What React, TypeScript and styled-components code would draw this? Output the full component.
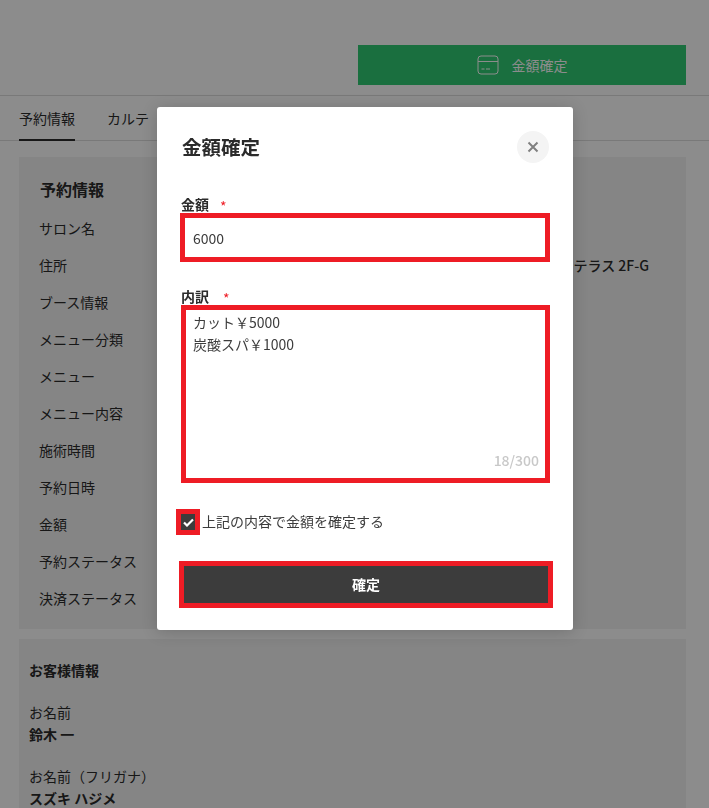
import styled, { createGlobalStyle } from "styled-components";

const GlobalStyle = createGlobalStyle`
  html, body {
    margin: 0;
    padding: 0;
    background: #fff;
    color: #2b2b2b;
    font-family: "Noto Sans CJK JP", "Noto Sans", sans-serif;
    height: 808px;
    overflow: hidden;
  }
  * { box-sizing: border-box; }
`;

const Page = styled.div`
  height: 808px;
  overflow: hidden;
`;

const Header = styled.header`
  height: 96px;
  padding: 45px 23px 0 0;
  display: flex;
  justify-content: flex-end;
  align-items: flex-start;
  border-bottom: 1px solid #ddd;
`;

const ConfirmLink = styled.button`
  width: 328px;
  height: 40px;
  border: none;
  background: #31cb74;
  color: #fff;
  font: inherit;
  font-size: 14px;
  display: flex;
  align-items: center;
  justify-content: center;
  gap: 13px;
  padding: 0;
`;

const Tabs = styled.nav`
  height: 45px;
  padding: 0 19px;
  display: flex;
  gap: 32px;
  border-bottom: 1px solid #ddd;
`;

const Tab = styled.div<{ $active?: boolean }>`
  height: 45px;
  font-size: 14px;
  line-height: 44px;
  color: #2b2b2b;
  border-bottom: ${(p) => (p.$active ? "2px solid #2b2b2b" : "none")};
`;

const Content = styled.main`
  padding: 16px 23px 0 19px;
  display: flex;
  flex-direction: column;
  gap: 10px;
`;

const InfoCard = styled.section`
  height: 472px;
  background: #f3f3f3;
  padding: 20px 37px 0 20px;
`;

const InfoTitle = styled.h2`
  margin: 0 0 9px 1px;
  font-size: 16px;
  line-height: 24px;
  font-weight: 700;
`;

const InfoRow = styled.div`
  height: 37px;
  font-size: 14px;
  line-height: 37px;
  display: flex;
  justify-content: space-between;
`;

const InfoValue = styled.span`
  font-weight: 500;
`;

const CustomerCard = styled.section`
  background: #f3f3f3;
  padding: 21px 10px 0;
`;

const CustomerTitle = styled.h3`
  margin: 0 0 21px;
  font-size: 14px;
  line-height: 20px;
  font-weight: 700;
`;

const FieldBlock = styled.div`
  font-size: 14px;
  line-height: 22px;
  margin-bottom: 20px;
`;

const FieldValue = styled.div`
  font-weight: 700;
`;

const Overlay = styled.div`
  position: fixed;
  inset: 0;
  background: rgba(0, 0, 0, 0.45);
`;

const Modal = styled.div`
  position: absolute;
  left: 157px;
  top: 107px;
  width: 416px;
  background: #fff;
  border-radius: 3px;
  padding: 24px 24px 22px;
  box-shadow: 0 2px 16px rgba(0, 0, 0, 0.18);
`;

const ModalHeader = styled.div`
  display: flex;
  justify-content: space-between;
  align-items: center;
  height: 32px;
  margin-bottom: 32px;
`;

const ModalTitle = styled.h2`
  margin: 0 0 0 1px;
  font-size: 19.5px;
  font-weight: 700;
  line-height: 32px;
  color: #2b2b2b;
`;

const CloseButton = styled.button`
  width: 32px;
  height: 32px;
  border: none;
  border-radius: 50%;
  background: #f4f4f4;
  padding: 0;
  display: flex;
  align-items: center;
  justify-content: center;
`;

const Label = styled.label`
  display: block;
  font-size: 14px;
  font-weight: 700;
  line-height: 18px;
  color: #2b2b2b;
`;

const Required = styled.span<{ $gap: number }>`
  color: #ee1c25;
  font-weight: 400;
  line-height: 0;
  margin-left: ${(p) => p.$gap}px;
  vertical-align: -2px;
`;

const AmountInput = styled.input`
  display: block;
  width: 370px;
  height: 49px;
  margin: 0 -1px 25px;
  border: 5px solid #ee1c25;
  outline: none;
  padding: 0 8px;
  font: inherit;
  font-size: 14px;
  color: #3c3c3c;
`;

const TextareaWrap = styled.div`
  position: relative;
  width: 369px;
  height: 178px;
  margin-bottom: 26px;
`;

const BreakdownArea = styled.textarea`
  display: block;
  width: 100%;
  height: 100%;
  border: 5px solid #ee1c25;
  outline: none;
  resize: none;
  padding: 1px 7px;
  font: inherit;
  font-size: 14px;
  line-height: 22px;
  color: #3c3c3c;
`;

const Counter = styled.span`
  position: absolute;
  right: 11px;
  bottom: 13px;
  font-size: 14px;
  font-weight: 500;
  line-height: 20px;
  color: #c8c8c8;
`;

const CheckRow = styled.div`
  display: flex;
  align-items: center;
  margin: 0 0 26px -5px;
  font-size: 14px;
  color: #3c3c3c;
  gap: 2px;
`;

const CheckFrame = styled.span`
  width: 24px;
  height: 26px;
  border: 5px solid #ee1c25;
  background: #3c3c3c;
  display: flex;
  align-items: center;
  justify-content: center;
`;

const CheckText = styled.span`
  margin-bottom: 2px;
`;

const SubmitButton = styled.button`
  display: block;
  width: 374px;
  height: 47px;
  margin-left: -2px;
  border: 5px solid #ee1c25;
  background: #3c3c3c;
  color: #fff;
  font: inherit;
  font-size: 14px;
  font-weight: 700;
  padding: 0 0 2px;
`;

const rows = ["サロン名", "住所", "ブース情報", "メニュー分類", "メニュー", "メニュー内容", "施術時間", "予約日時", "金額", "予約ステータス", "決済ステータス"];

export default function App() {
  return (
    <>
      <GlobalStyle />
      <Page>
        <Header>
          <ConfirmLink>
            <svg width="22" height="20" viewBox="0 0 22 20" fill="none" stroke="#fff" strokeWidth="1">
              <rect x="1" y="1" width="20" height="18" rx="3" />
              <path d="M1 6.5h20M4.5 14h3M9 14h4" />
            </svg>
            金額確定
          </ConfirmLink>
        </Header>
        <Tabs>
          <Tab $active>予約情報</Tab>
          <Tab>カルテ</Tab>
        </Tabs>
        <Content>
          <InfoCard>
            <InfoTitle>予約情報</InfoTitle>
            {rows.map((label) => (
              <InfoRow key={label}>
                <span>{label}</span>
                {label === "住所" && <InfoValue>テラス 2F-G</InfoValue>}
              </InfoRow>
            ))}
          </InfoCard>
          <CustomerCard>
            <CustomerTitle>お客様情報</CustomerTitle>
            <FieldBlock>
              お名前
              <FieldValue>鈴木 一</FieldValue>
            </FieldBlock>
            <FieldBlock>
              お名前（フリガナ）
              <FieldValue>スズキ ハジメ</FieldValue>
            </FieldBlock>
          </CustomerCard>
        </Content>
      </Page>
      <Overlay />
      <Modal>
        <ModalHeader>
          <ModalTitle>金額確定</ModalTitle>
          <CloseButton aria-label="閉じる">
            <svg width="12" height="12" viewBox="0 0 12 12" stroke="#808080" strokeWidth="2" fill="none">
              <path d="M1.5 1.5l9 9M10.5 1.5l-9 9" />
            </svg>
          </CloseButton>
        </ModalHeader>
        <Label>
          金額<Required $gap={11}>*</Required>
        </Label>
        <AmountInput defaultValue="6000" />
        <Label>
          内訳<Required $gap={14}>*</Required>
        </Label>
        <TextareaWrap>
          <BreakdownArea defaultValue={"カット￥5000\n炭酸スパ￥1000"} />
          <Counter>18/300</Counter>
        </TextareaWrap>
        <CheckRow>
          <CheckFrame>
            <svg width="11" height="9" viewBox="0 0 11 9" fill="none" stroke="#fff" strokeWidth="2.2">
              <path d="M1 4.5l3 3 6-6" />
            </svg>
          </CheckFrame>
          <CheckText>上記の内容で金額を確定する</CheckText>
        </CheckRow>
        <SubmitButton>確定</SubmitButton>
      </Modal>
    </>
  );
}
